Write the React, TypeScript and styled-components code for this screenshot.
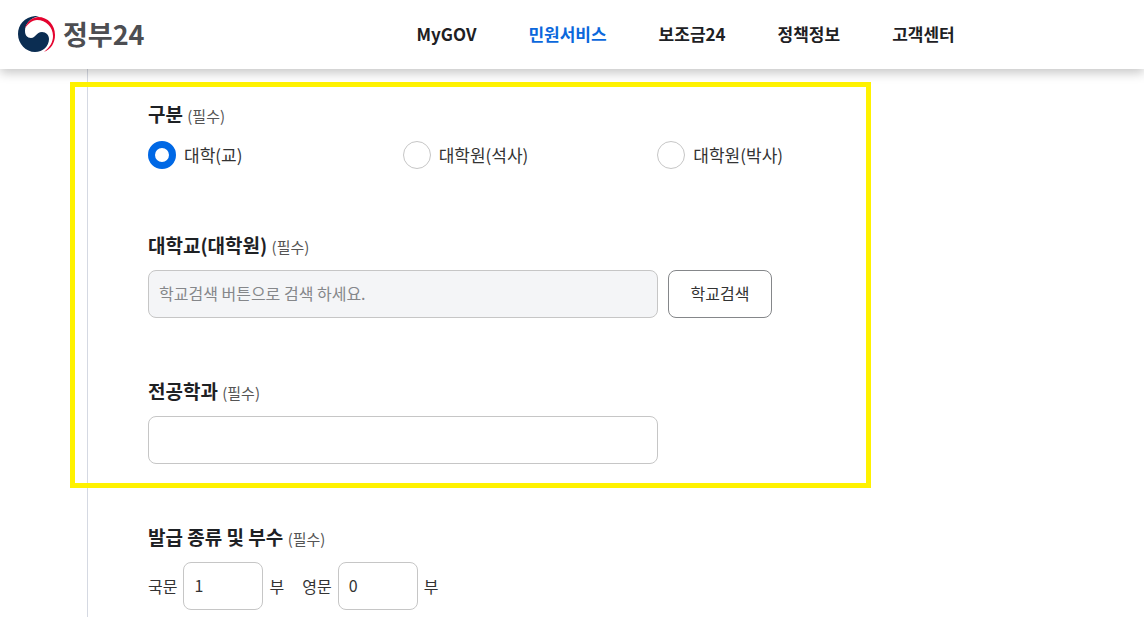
import React, { useState } from "react";
import styled, { createGlobalStyle } from "styled-components";

const GlobalStyle = createGlobalStyle`
  *, *::before, *::after { box-sizing: border-box; }
  body {
    margin: 0;
    background: #fff;
    color: #333;
    font: 400 16px/28px "Noto Sans CJK KR", sans-serif;
  }
  input, button { font: inherit; color: inherit; }
`;

const Page = styled.div`
  display: flex;
  flex-direction: column;
  min-height: 100vh;
`;

const Header = styled.header`
  position: sticky;
  top: 0;
  z-index: 2;
  display: flex;
  align-items: center;
  gap: 272px;
  height: 69px;
  padding: 0 18px 1px;
  background: #fff;
  box-shadow: 0 4px 10px rgba(0, 0, 0, 0.22);
`;

const Brand = styled.a`
  display: flex;
  flex: none;
  align-items: center;
  gap: 7px;
  color: #4d4e52;
  font-size: 27px;
  font-weight: 700;
  text-decoration: none;
`;

const Nav = styled.nav`
  display: flex;
  gap: 52px;
  white-space: nowrap;
`;

const NavLink = styled.a<{ $active?: boolean }>`
  color: ${(p) => (p.$active ? "#0b68dc" : "#1e2124")};
  font-size: 17px;
  font-weight: 700;
  text-decoration: none;
`;

const Panel = styled.main`
  flex: 1;
  margin-left: 87px;
  padding: 32px 60px 0;
  border-left: 1px solid #d5d9e2;
`;

const Form = styled.form`
  display: flex;
  flex-direction: column;
  gap: 60px;
  max-width: 764px;
`;

const Highlight = styled.div`
  position: relative;
  display: flex;
  flex-direction: column;
  gap: 60px;

  &::after {
    content: "";
    position: absolute;
    inset: -19px 41px -24px -78px;
    border: 5px solid #fff200;
    pointer-events: none;
  }
`;

const Field = styled.fieldset`
  display: flex;
  flex-direction: column;
  min-width: 0;
  margin: 0;
  padding: 0;
  border: 0;
`;

const titleStyle = `
  display: block;
  margin-bottom: 12px;
  padding: 0;
  color: #1e2124;
  font-size: 19px;
  font-weight: 700;
  line-height: 26px;
`;

const Legend = styled.legend`${titleStyle}`;
const Title = styled.label`${titleStyle}`;

const Required = styled.span`
  color: #555;
  font-size: 15px;
  font-weight: 400;
  line-height: 1;
`;

const RadioRow = styled.div`
  display: grid;
  grid-template-columns: repeat(3, 1fr);
  padding: 2px 0 3px;
`;

const RadioLabel = styled.label`
  display: flex;
  align-items: center;
  gap: 8px;
  font-size: 17px;
  line-height: 26px;
`;

const Radio = styled.input`
  appearance: none;
  width: 28px;
  height: 28px;
  margin: 0;
  border: 1px solid #c6c6c6;
  border-radius: 50%;
  background: #fff;

  &:checked { border: 7px solid #0068e5; }
`;

const Row = styled.div`
  display: flex;
  align-items: center;
  gap: 10px;
`;

const TextInput = styled.input`
  width: 510px;
  height: 48px;
  padding: 0 10px 2px;
  border: 1px solid #c6c6c6;
  border-radius: 8px;
  background: #fff;

  &:read-only { background: #f4f5f7; }
  &::placeholder { color: #85878a; opacity: 1; }
`;

const SearchButton = styled.button`
  width: 104px;
  height: 48px;
  padding: 0 0 2px;
  border: 1px solid #85878a;
  border-radius: 8px;
  background: #fff;
`;

const Copies = styled.div`
  display: flex;
  gap: 18px;
`;

const CopyLabel = styled.label`
  display: flex;
  align-items: center;
  gap: 6px;
`;

const CopyInput = styled(TextInput)`
  width: 80px;
`;

const menu = ["MyGOV", "민원서비스", "보조금24", "정책정보", "고객센터"];
const degrees = ["대학(교)", "대학원(석사)", "대학원(박사)"];

const Emblem = () => (
  <svg width="38" height="37" viewBox="0 0 38 37" aria-hidden="true">
    <path fill="#0b2d52" d="M21 0C8-1 0 8 0 18s8 18 17 18c8 0 14-6 14-13 0-4-3-7-7-7-6 0-6 6-11 6-4 0-6-3-6-7C7 8 12 2 21 0Z" />
    <path fill="#e4032e" d="M7 12C9 6 13 2 20 1c10 0 17 8 17 18 0 8-4 14-11 17 6-5 9-10 9-16 0-9-7-16-16-16-5 0-9 4-12 8Z" />
  </svg>
);

export default function App() {
  const [degree, setDegree] = useState(degrees[0]);
  const required = <Required>(필수)</Required>;

  return (
    <Page>
      <GlobalStyle />
      <Header>
        <Brand href="#">
          <Emblem />
          정부24
        </Brand>
        <Nav>
          {menu.map((item) => (
            <NavLink key={item} href="#" $active={item === "민원서비스"}>
              {item}
            </NavLink>
          ))}
        </Nav>
      </Header>
      <Panel>
        <Form>
          <Highlight>
            <Field>
              <Legend>구분 {required}</Legend>
              <RadioRow>
                {degrees.map((item) => (
                  <RadioLabel key={item}>
                    <Radio
                      type="radio"
                      name="degree"
                      checked={degree === item}
                      onChange={() => setDegree(item)}
                    />
                    {item}
                  </RadioLabel>
                ))}
              </RadioRow>
            </Field>
            <div>
              <Title htmlFor="school">대학교(대학원) {required}</Title>
              <Row>
                <TextInput id="school" readOnly placeholder="학교검색 버튼으로 검색 하세요." />
                <SearchButton type="button">학교검색</SearchButton>
              </Row>
            </div>
            <div>
              <Title htmlFor="major">전공학과 {required}</Title>
              <Row>
                <TextInput id="major" type="text" />
              </Row>
            </div>
          </Highlight>
          <Field>
            <Legend>발급 종류 및 부수 {required}</Legend>
            <Copies>
              <CopyLabel>
                국문 <CopyInput type="text" defaultValue="1" /> 부
              </CopyLabel>
              <CopyLabel>
                영문 <CopyInput type="text" defaultValue="0" /> 부
              </CopyLabel>
            </Copies>
          </Field>
        </Form>
      </Panel>
    </Page>
  );
}
